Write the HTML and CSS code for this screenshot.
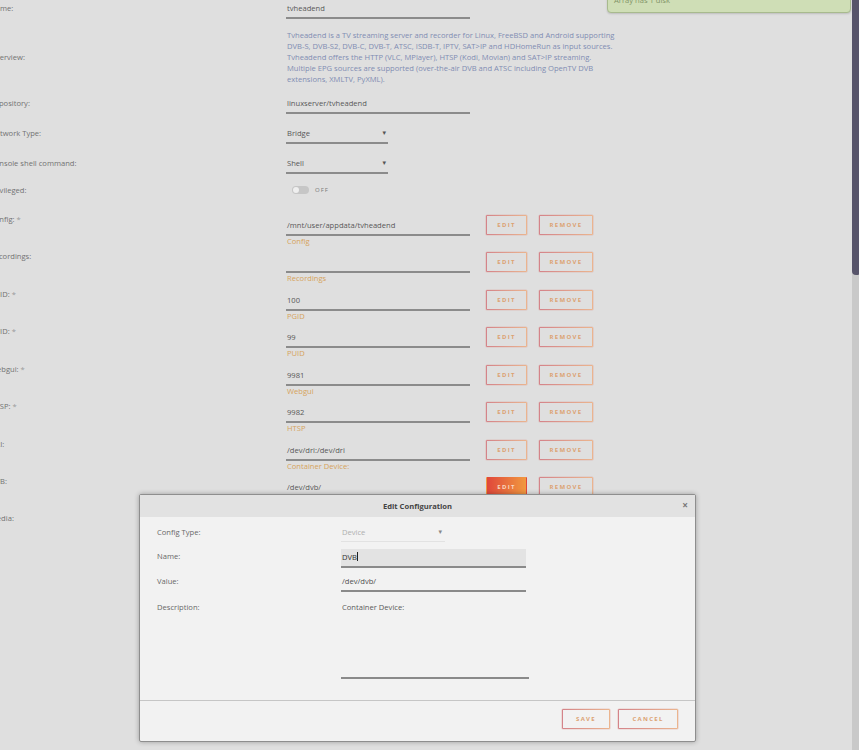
FILE: index.html
```html
<!DOCTYPE html>
<html>
<head>
<meta charset="utf-8">
<link rel="stylesheet" href="styles.css">
</head>
<body>
<div class="form">
  <div class="row r-name">
    <div class="label">Name:</div>
    <div class="input w184">tvheadend</div>
  </div>
  <div class="row r-overview">
    <div class="label">Overview:</div>
    <div class="desc">Tvheadend is a TV streaming server and recorder for Linux, FreeBSD and Android supporting<br>DVB-S, DVB-S2, DVB-C, DVB-T, ATSC, ISDB-T, IPTV, SAT&gt;IP and HDHomeRun as input sources.<br>Tvheadend offers the HTTP (VLC, MPlayer), HTSP (Kodi, Movian) and SAT&gt;IP streaming.<br>Multiple EPG sources are supported (over-the-air DVB and ATSC including OpenTV DVB<br>extensions, XMLTV, PyXML).</div>
  </div>
  <div class="row r-repo">
    <div class="label">Repository:</div>
    <div class="input w184">linuxserver/tvheadend</div>
  </div>
  <div class="row r-simple">
    <div class="label">Network Type:</div>
    <div class="input select w102"><span>Bridge</span><span class="arrow">▾</span></div>
  </div>
  <div class="row r-simple">
    <div class="label">Console shell command:</div>
    <div class="input select w102"><span>Shell</span><span class="arrow">▾</span></div>
  </div>
  <div class="row r-priv">
    <div class="label">Privileged:</div>
    <div class="toggle-wrap"><span class="toggle"><span class="knob"></span></span><span class="off">OFF</span></div>
  </div>

  <div class="row r-path">
    <div class="label">Config: <span class="req">*</span></div>
    <div class="pfield"><div class="input">/mnt/user/appdata/tvheadend</div><div class="sub">Config</div></div>
    <div class="btns"><span class="btn edit">EDIT</span><span class="btn remove">REMOVE</span></div>
  </div>
  <div class="row r-path">
    <div class="label">Recordings:</div>
    <div class="pfield"><div class="input empty">&nbsp;</div><div class="sub">Recordings</div></div>
    <div class="btns"><span class="btn edit">EDIT</span><span class="btn remove">REMOVE</span></div>
  </div>
  <div class="row r-path">
    <div class="label">PGID: <span class="req">*</span></div>
    <div class="pfield"><div class="input">100</div><div class="sub">PGID</div></div>
    <div class="btns"><span class="btn edit">EDIT</span><span class="btn remove">REMOVE</span></div>
  </div>
  <div class="row r-path">
    <div class="label">PUID: <span class="req">*</span></div>
    <div class="pfield"><div class="input">99</div><div class="sub">PUID</div></div>
    <div class="btns"><span class="btn edit">EDIT</span><span class="btn remove">REMOVE</span></div>
  </div>
  <div class="row r-path">
    <div class="label">Webgui: <span class="req">*</span></div>
    <div class="pfield"><div class="input">9981</div><div class="sub">Webgui</div></div>
    <div class="btns"><span class="btn edit">EDIT</span><span class="btn remove">REMOVE</span></div>
  </div>
  <div class="row r-path">
    <div class="label">HTSP: <span class="req">*</span></div>
    <div class="pfield"><div class="input">9982</div><div class="sub">HTSP</div></div>
    <div class="btns"><span class="btn edit">EDIT</span><span class="btn remove">REMOVE</span></div>
  </div>
  <div class="row r-path">
    <div class="label">DRI:</div>
    <div class="pfield"><div class="input">/dev/dri:/dev/dri</div><div class="sub">Container Device:</div></div>
    <div class="btns"><span class="btn edit">EDIT</span><span class="btn remove">REMOVE</span></div>
  </div>
  <div class="row r-path">
    <div class="label">DVB:</div>
    <div class="pfield"><div class="input">/dev/dvb/</div><div class="sub">Container Device:</div></div>
    <div class="btns"><span class="btn edit active">EDIT</span><span class="btn remove">REMOVE</span></div>
  </div>
  <div class="row r-media">
    <div class="label">Media:</div>
  </div>
</div>

<div class="toast">Array has 1 disk</div>

<div class="sb-track"><div class="sb-thumb"></div></div>

<div class="modal">
  <div class="m-head">
    <span class="m-title">Edit Configuration</span>
    <span class="m-close">×</span>
  </div>
  <div class="m-body">
    <div class="m-row m-r1">
      <div class="m-label">Config Type:</div>
      <div class="m-select"><span>Device</span><span class="arrow">▾</span></div>
    </div>
    <div class="m-row m-r2">
      <div class="m-label">Name:</div>
      <div class="m-input focus">DVB<span class="caret"></span></div>
    </div>
    <div class="m-row m-r3">
      <div class="m-label">Value:</div>
      <div class="m-input">/dev/dvb/</div>
    </div>
    <div class="m-row m-r4">
      <div class="m-label">Description:</div>
      <div class="m-textarea">Container Device:</div>
    </div>
  </div>
  <div class="m-foot">
    <span class="btn save">SAVE</span>
    <span class="btn cancel">CANCEL</span>
  </div>
</div>
</body>
</html>
```
FILE: styles.css
```css
html, body {
  margin: 0;
  padding: 0;
}
body {
  width: 859px;
  height: 750px;
  overflow: hidden;
  background: #dfdfdf;
  font-family: "Open Sans", "DejaVu Sans", sans-serif;
  font-size: 7.6px;
  color: #666;
  position: relative;
}

.form {
  margin-left: -10px;
  display: flex;
  flex-direction: column;
}
.row {
  display: flex;
  align-items: flex-start;
}
.label {
  width: 296px;
  flex: none;
  padding-top: 3px;
  line-height: 10px;
  color: #727272;
}
.req { color: #9a9a9a; }

.input {
  box-sizing: border-box;
  padding: 3px 0 4px 1px;
  line-height: 10px;
  height: 19px;
  border-bottom: 2px solid #8b8b8b;
  color: #585858;
}
.w184 { width: 184px; }
.w102 { width: 102px; }
.select {
  display: flex;
  justify-content: space-between;
}
.arrow {
  font-size: 7px;
  color: #555;
  padding-right: 2px;
}

.r-name { height: 19px; }
.r-overview {
  margin-top: 10.5px;
  height: 55px;
  align-items: center;
}
.r-overview .label { padding-top: 0; }
.desc {
  line-height: 11px;
  color: #7f8db3;
  white-space: nowrap;
  padding-left: 1px;
}
.r-repo { margin-top: 10.5px; }
.r-simple { margin-top: 11px; }
.r-priv {
  margin-top: 8px;
  height: 29px;
}
.toggle-wrap {
  display: flex;
  align-items: center;
  margin-top: 4px;
  margin-left: 6px;
  height: 8px;
}
.toggle {
  display: block;
  width: 17px;
  height: 8px;
  border-radius: 4px;
  background: #c6c6c6;
  position: relative;
}
.knob {
  position: absolute;
  left: 1px;
  top: 1px;
  width: 6px;
  height: 6px;
  border-radius: 50%;
  background: #efefef;
}
.off {
  margin-left: 6px;
  font-size: 6px;
  letter-spacing: 1px;
  color: #7a7a7a;
}

.r-path { height: 37.43px; }
.pfield {
  width: 184px;
  padding-top: 6px;
}
.pfield .input { height: 19px; }
.sub {
  line-height: 10px;
  color: #d6a35c;
  padding-left: 1px;
}
.btns {
  display: flex;
  gap: 12px;
  margin-left: 16px;
  margin-top: 4px;
}
.btn {
  box-sizing: border-box;
  height: 20px;
  display: flex;
  align-items: center;
  justify-content: center;
  font-size: 6px;
  font-weight: bold;
  letter-spacing: 1.3px;
  color: #dca272;
  border: 1px solid transparent;
  border-radius: 1px;
  background: linear-gradient(#dfdfdf, #dfdfdf) padding-box,
              linear-gradient(90deg, #d4838a, #ebb58e) border-box;
  box-shadow: 0 0 0 0.6px rgba(220, 150, 140, 0.4);
}
.edit { width: 41px; }
.remove { width: 54px; }
.btn.active {
  background: linear-gradient(90deg, #e0473b, #f1993f);
  color: #f8d6bf;
  box-shadow: none;
}

.toast {
  position: absolute;
  left: 607px;
  top: -12px;
  width: 244px;
  height: 25px;
  box-sizing: border-box;
  background: #cfdeb6;
  border: 1px solid #a8ba8e;
  border-radius: 4px;
  box-shadow: 0 1px 2px rgba(0, 0, 0, 0.15);
  padding: 6px 0 0 6px;
  line-height: 10px;
  color: #829466;
}

.sb-track {
  position: absolute;
  right: 0;
  top: 0;
  width: 7.5px;
  height: 750px;
  background: #c9c9c9;
}
.sb-thumb {
  height: 275px;
  background: #57546a;
  border-bottom-left-radius: 4px;
  border-bottom-right-radius: 1px;
}

.modal {
  position: absolute;
  left: 139px;
  top: 494px;
  width: 557px;
  height: 248px;
  box-sizing: border-box;
  border: 1px solid #8e8e8e;
  border-radius: 2px;
  background: #f2f2f2;
  box-shadow: 0 0 5px rgba(0, 0, 0, 0.3);
  display: flex;
  flex-direction: column;
}
.m-head {
  height: 22px;
  flex: none;
  background: #e2e2e2;
  display: flex;
  align-items: center;
  justify-content: center;
  position: relative;
}
.m-title {
  font-weight: bold;
  color: #444;
}
.m-close {
  position: absolute;
  right: 5px;
  top: 5px;
  width: 10px;
  height: 11px;
  line-height: 11px;
  text-align: center;
  font-size: 10px;
  font-weight: bold;
  color: #777;
}
.m-body {
  flex: 1;
  padding: 7px 0 0 17px;
}
.m-row {
  display: flex;
  align-items: flex-start;
}
.m-label {
  width: 184px;
  flex: none;
  padding-top: 3px;
  line-height: 10px;
  color: #686868;
}
.m-select {
  box-sizing: border-box;
  width: 104px;
  height: 18px;
  padding: 3px 3px 4px 1px;
  line-height: 10px;
  border-bottom: 1px solid #e2e2e2;
  color: #b0b0b0;
  display: flex;
  justify-content: space-between;
}
.m-select .arrow { color: #888; padding-right: 0; }
.m-r2 { margin-top: 6px; }
.m-r3 { margin-top: 5px; }
.m-r4 { margin-top: 7px; }
.m-input {
  box-sizing: border-box;
  width: 185px;
  height: 19px;
  padding: 3px 0 4px 1px;
  line-height: 10px;
  border-bottom: 2px solid #8a8a8a;
  color: #505050;
}
.m-input.focus {
  margin-top: 1px;
  background: #e3e3e3;
  color: #333;
}
.caret {
  display: inline-block;
  width: 1px;
  height: 9px;
  background: #222;
  vertical-align: -1px;
  margin-left: 0.5px;
}
.m-textarea {
  box-sizing: border-box;
  width: 188px;
  height: 80px;
  padding: 3px 0 0 1px;
  line-height: 10px;
  border-bottom: 2px solid #8a8a8a;
  color: #5a5a5a;
}
.m-foot {
  flex: none;
  border-top: 1px solid #c6c6c6;
  padding: 8px 17px 12px 0;
  display: flex;
  justify-content: flex-end;
  gap: 8px;
}
.m-foot .btn {
  background: linear-gradient(#f2f2f2, #f2f2f2) padding-box,
              linear-gradient(90deg, #d4838a, #ebb58e) border-box;
}
.save { width: 48px; }
.cancel { width: 60px; }
```
